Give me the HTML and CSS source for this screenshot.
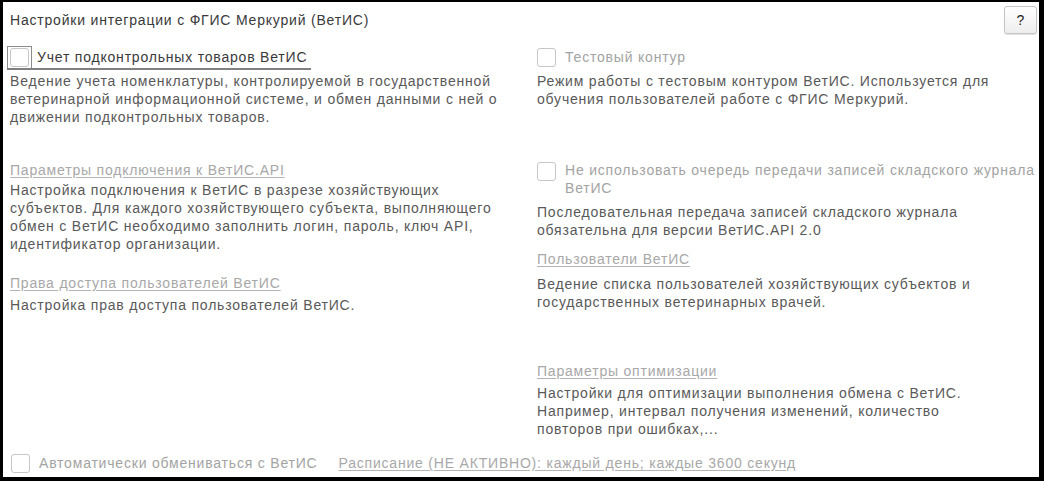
FILE: index.html
```html
<!DOCTYPE html>
<html lang="ru">
<head>
<meta charset="utf-8">
<title>Настройки интеграции с ФГИС Меркурий (ВетИС)</title>
<link rel="stylesheet" href="styles.css">
</head>
<body>
<div class="frame">
  <div class="header">
    <div class="title">Настройки интеграции с ФГИС Меркурий (ВетИС)</div>
    <button class="help" type="button">?</button>
  </div>
  <div class="grid">
    <div class="col col-left">
      <div class="check check-focus">
        <span class="focus-frame"><span class="box"></span></span>
        <span class="label label-active">Учет подконтрольных товаров ВетИС</span>
      </div>
      <p class="desc desc-1">Ведение учета номенклатуры, контролируемой в государственной ветеринарной информационной системе, и обмен данными с ней о движении подконтрольных товаров.</p>
      <a class="link link-api" href="#">Параметры подключения к ВетИС.API</a>
      <p class="desc desc-api">Настройка подключения к ВетИС в разрезе хозяйствующих субъектов. Для каждого хозяйствующего субъекта, выполняющего обмен с ВетИС необходимо заполнить логин, пароль, ключ API, идентификатор организации.</p>
      <a class="link link-rights" href="#">Права доступа пользователей ВетИС</a>
      <p class="desc desc-rights">Настройка прав доступа пользователей ВетИС.</p>
    </div>
    <div class="col col-right">
      <div class="check">
        <span class="box"></span>
        <span class="label">Тестовый контур</span>
      </div>
      <p class="desc desc-test">Режим работы с тестовым контуром ВетИС. Используется для обучения пользователей работе с ФГИС Меркурий.</p>
      <div class="check check-multi">
        <span class="box"></span>
        <span class="label">Не использовать очередь передачи записей складского журнала ВетИС</span>
      </div>
      <p class="desc desc-queue">Последовательная передача записей складского журнала обязательна для версии ВетИС.API 2.0</p>
      <a class="link link-users" href="#">Пользователи ВетИС</a>
      <p class="desc desc-users">Ведение списка пользователей хозяйствующих субъектов и государственных ветеринарных врачей.</p>
      <a class="link link-opt" href="#">Параметры оптимизации</a>
      <p class="desc desc-opt">Настройки для оптимизации выполнения обмена с ВетИС. Например, интервал получения изменений, количество повторов при ошибках,...</p>
    </div>
  </div>
  <div class="footer">
    <div class="check">
      <span class="box"></span>
      <span class="label">Автоматически обмениваться с ВетИС</span>
    </div>
    <a class="link link-schedule" href="#">Расписание (НЕ АКТИВНО): каждый день; каждые 3600 секунд</a>
  </div>
</div>
</body>
</html>
```
FILE: styles.css
```css
* { box-sizing: border-box; }
html, body { margin: 0; padding: 0; background: #fff; }
body {
  font-family: "Liberation Sans", Arial, sans-serif;
  font-size: 14px;
  line-height: 18px;
  letter-spacing: 0.8px;
  color: #595959;
}
.frame {
  width: 1044px;
  height: 481px;
  border-style: solid;
  border-color: #000;
  border-width: 2px 5px 4px 3px;
  padding: 0 2px 3px 7px;
  display: flex;
  flex-direction: column;
  background: #fff;
}
.header {
  display: flex;
  align-items: center;
  justify-content: space-between;
  padding-top: 4px;
  height: 32px;
}
.title { color: #3a3a3a; }
.help {
  width: 33px;
  height: 28px;
  padding: 0;
  font: inherit;
  font-size: 14px;
  color: #222;
  border: 1px solid #c4c4c4;
  border-radius: 3px;
  background: linear-gradient(#ffffff, #eeeeee);
  box-shadow: 0 1px 1px rgba(0,0,0,0.12);
}
.grid {
  display: grid;
  grid-template-columns: 490px 500px;
  column-gap: 37px;
  margin-top: 12px;
}
.col { display: flex; flex-direction: column; align-items: flex-start; }
.check {
  display: flex;
  align-items: center;
  height: 22px;
  color: #a3a3a3;
}
.box {
  width: 19px;
  height: 19px;
  border: 1px solid #c6c6c6;
  border-radius: 3px;
  background: #fff;
  flex: none;
}
.check .label { margin-left: 9px; }
.check-focus {
  margin-left: -3px;
  height: 24px;
  align-items: stretch;
  border-bottom: 2px solid #808080;
  padding-right: 4px;
}
.focus-frame {
  display: flex;
  align-items: center;
  border: 1px solid #8c8c8c;
  border-bottom: none;
  padding: 0 2px 0 2px;
}
.check-focus .label {
  margin-left: 5px;
  display: flex;
  align-items: center;
  color: #3a3a3a;
}
.desc { margin: 0; }
.link {
  color: #a8a8a8;
  text-decoration: underline;
  text-decoration-color: #b3b3b3;
  text-underline-offset: 2px;
}
.desc-1 { margin-top: 2px; }
.link-api { margin-top: 35px; }
.desc-api { margin-top: 2px; }
.link-rights { margin-top: 21px; }
.desc-rights { margin-top: 4px; }

.desc-test { margin-top: 4px; }
.check-multi {
  margin-top: 53px;
  height: auto;
  align-items: flex-start;
}
.check-multi .box { margin-top: 1px; }
.desc-queue { margin-top: 6px; }
.link-users { margin-top: 11px; }
.desc-users { margin-top: 7px; }
.link-opt { margin-top: 51px; }
.desc-opt { margin-top: 4px; max-width: 440px; }

.footer {
  margin-top: auto;
  display: flex;
  align-items: center;
  padding-left: 1px;
}
.link-schedule { margin-left: 21px; }
```
